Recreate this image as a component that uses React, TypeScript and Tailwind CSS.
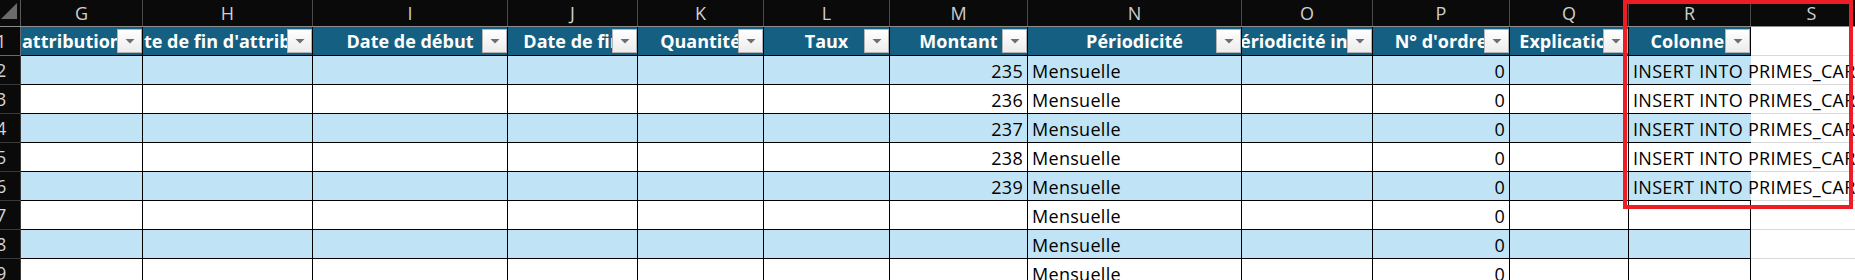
import React from "react";

type Col = {
  letter: string;
  w: string;
  head: string;
  align: "left" | "center";
  shift?: string;
  filter: boolean;
};

const cols: Col[] = [
  { letter: "G", w: "w-[122px]", head: "attribution", align: "left", shift: "pl-[1px]", filter: true },
  { letter: "H", w: "w-[170px]", head: "te de fin d'attribution", align: "left", shift: "pl-[1px]", filter: true },
  { letter: "I", w: "w-[195px]", head: "Date de début", align: "center", filter: true },
  { letter: "J", w: "w-[130px]", head: "Date de fin", align: "center", filter: true },
  { letter: "K", w: "w-[126px]", head: "Quantité", align: "center", filter: true },
  { letter: "L", w: "w-[126px]", head: "Taux", align: "center", filter: true },
  { letter: "M", w: "w-[138px]", head: "Montant", align: "center", filter: true },
  { letter: "N", w: "w-[214px]", head: "Périodicité", align: "center", filter: true },
  { letter: "O", w: "w-[131px]", head: "ériodicité intermédiaire", align: "left", shift: "-ml-[2px]", filter: true },
  { letter: "P", w: "w-[137px]", head: "N° d'ordre", align: "center", filter: true },
  { letter: "Q", w: "w-[119px]", head: "Explication", align: "center", filter: true },
  { letter: "R", w: "w-[122px]", head: "Colonne1", align: "center", shift: "ml-[6px]", filter: true },
];

const montants: (number | null)[] = [235, 236, 237, 238, 239, null, null, null];

function FilterButton() {
  return (
    <div className="absolute right-0 top-[2px] z-10 flex h-[24px] w-[25px] items-center justify-center border border-[#b4b4b4] bg-gradient-to-b from-[#ffffff] to-[#ececec]">
      <svg width="10" height="5" viewBox="0 0 10 5">
        <polygon points="0.5,0 9.5,0 5,4.5" fill="#6e6e6e" />
      </svg>
    </div>
  );
}

export default function App() {
  const font = { fontFamily: '"Open Sans", "Noto Sans", sans-serif' };
  return (
    <div
      className="relative h-[280px] w-[1855px] overflow-hidden bg-white"
      style={font}
    >
      {/* Column letters bar */}
      <div className="flex h-[27px] w-[1872px] border-b border-[#8c8c8c] bg-[#0a0a0a]">
        <div className="relative h-full w-[21px] shrink-0 border-r border-[#5a5a5a]">
          <svg className="absolute left-0 top-0" width="20" height="26" viewBox="0 0 20 26">
            <polygon points="17,3 17,19 1,19" fill="#6b6b6b" />
          </svg>
        </div>
        {cols.map((c) => (
          <div
            key={c.letter}
            className={`${c.w} flex h-full shrink-0 items-center justify-center border-r border-[#4a4a4a] text-[18px] leading-none text-[#cfcfcf]`}
          >
            {c.letter}
          </div>
        ))}
        <div className="flex h-full w-[121px] shrink-0 items-center justify-center text-[18px] leading-none text-[#cfcfcf]">
          S
        </div>
      </div>

      {/* Header row 1 */}
      <div className="flex h-[29px] w-[1872px]">
        <div className="flex h-full w-[21px] shrink-0 items-center overflow-hidden border-r border-b border-[#6a6a6a] bg-[#0a0a0a] text-[18px] leading-none text-[#d4d4d4]">
          <span className="-ml-[4px]">1</span>
        </div>
        {cols.map((c) => (
          <div
            key={c.letter}
            className={`${c.w} relative flex h-full shrink-0 items-center overflow-hidden border-r border-b border-black bg-[#156082] ${
              c.align === "center" ? "justify-center" : "justify-start"
            }`}
          >
            <span
              className={`whitespace-nowrap text-[18px] font-bold leading-none text-white ${c.shift ?? ""}`}
            >
              {c.head}
            </span>
            {c.filter && <FilterButton />}
          </div>
        ))}
        <div className="h-full w-[121px] shrink-0 border-b border-[#dadada] bg-white" />
      </div>

      {/* Data rows 2-9 */}
      {montants.map((m, i) => {
        const rowNum = i + 2;
        const blue = i % 2 === 0;
        const bg = blue ? "bg-[#c0e4f5]" : "bg-white";
        const hasInsert = i < 5;
        return (
          <div key={rowNum} className="flex h-[29px] w-[1872px]">
            <div className="flex h-full w-[21px] shrink-0 items-center overflow-hidden border-r border-b border-[#3a3a3a] bg-[#0a0a0a] text-[18px] leading-none text-[#d4d4d4]">
              <span className="-ml-[4px]">{rowNum}</span>
            </div>
            {cols.map((c) => {
              let content: React.ReactNode = null;
              let justify = "justify-start";
              if (c.letter === "M" && m !== null) {
                content = String(m);
                justify = "justify-end";
              } else if (c.letter === "N") {
                content = "Mensuelle";
              } else if (c.letter === "P") {
                content = "0";
                justify = "justify-end";
              } else if (c.letter === "R" && hasInsert) {
                content = "INSERT INTO PRIMES_CARRIERE";
              }
              const isR = c.letter === "R";
              const border = isR
                ? hasInsert
                  ? "border-b border-black"
                  : "border-r border-b border-black"
                : "border-r border-b border-black";
              return (
                <div
                  key={c.letter}
                  className={`${c.w} relative flex h-full shrink-0 items-center ${justify} px-[4px] ${bg} ${border} ${
                    isR ? "overflow-visible" : "overflow-hidden"
                  }`}
                >
                  {content !== null && (
                    <span className="relative z-10 whitespace-nowrap pt-[2px] text-[18px] leading-none tracking-[0.3px] text-black">
                      {content}
                    </span>
                  )}
                </div>
              );
            })}
            <div className="h-full w-[121px] shrink-0 border-b border-[#dadada] bg-white" />
          </div>
        );
      })}

      {/* Red highlight frame */}
      <div className="pointer-events-none absolute left-[1623px] top-0 z-20 h-[209px] w-[230px] border-4 border-[#ee1c25]" />
    </div>
  );
}
